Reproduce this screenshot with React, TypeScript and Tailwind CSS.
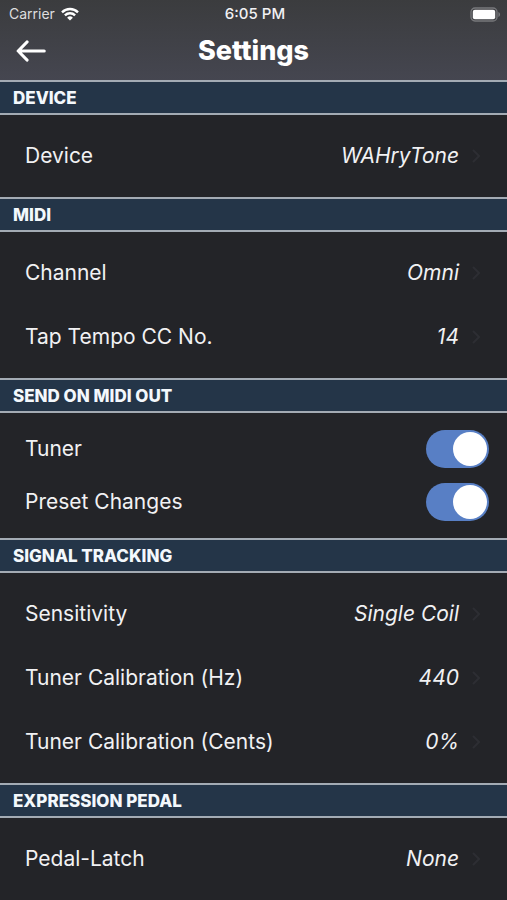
import { useState } from 'react';

type Item = { label: string; value: string };

function SectionTitle({ children }: { children: string }) {
  return (
    <h2 className="flex h-[35px] items-center border-y-2 border-[#a3abb4] bg-[#243548] px-[13px] font-['Inter',sans-serif] text-[17px] leading-[20px] font-extrabold text-[#f3f8fc] uppercase">
      {children}
    </h2>
  );
}

function LinkRow({ label, value }: Item) {
  return (
    <li>
      <button type="button" className="flex h-16 w-full items-center pr-[27px] pl-[25px] text-left">
        <span className="flex-1">{label}</span>
        <span className="italic">{value}</span>
        <svg aria-hidden="true" viewBox="0 0 8 14" className="ml-[13px] h-[14px] w-2" fill="none" stroke="#2d2e33" strokeWidth="2">
          <path d="M1 1l6 6-6 6" />
        </svg>
      </button>
    </li>
  );
}

function LinkSection({ title, items }: { title: string; items: Item[] }) {
  return (
    <section>
      <SectionTitle>{title}</SectionTitle>
      <ul className="py-[9px]">
        {items.map((item) => (
          <LinkRow key={item.label} {...item} />
        ))}
      </ul>
    </section>
  );
}

function ToggleRow({ label }: { label: string }) {
  const [on, setOn] = useState(true);
  return (
    <label className="flex h-[53px] items-center justify-between pr-[18px] pl-[25px]">
      <span>{label}</span>
      <input
        type="checkbox"
        role="switch"
        checked={on}
        onChange={() => setOn(!on)}
        className="flex h-[38px] w-[63px] appearance-none items-center rounded-full bg-[#4a4b50] px-[2px] before:size-[34px] before:rounded-full before:bg-white checked:justify-end checked:bg-[#587fc5]"
      />
    </label>
  );
}

export default function App() {
  return (
    <div className="min-h-screen bg-[#232428] font-['Inter',sans-serif] text-[21px] leading-[28px] text-[#f1f1f3]">
      <header className="h-20 bg-linear-to-b from-[#3b3c3e] to-[#454650]">
        <div className="grid h-7 grid-cols-3 items-center pr-[6px] pl-[9px] text-[14px] leading-[20px]">
          <div className="flex items-center gap-[6px] text-[#dededf]">
            <span>Carrier</span>
            <svg aria-label="Wi-Fi" viewBox="0 0 18 14" className="h-[14px] w-[18px]" fill="none" stroke="#fff" strokeWidth="2.4">
              <path d="M1 5.3a11.5 11.5 0 0 1 16 0M3.9 8.3a7.3 7.3 0 0 1 10.2 0" />
              <path d="M9 13.6L6.1 10.7a4.1 4.1 0 0 1 5.8 0z" fill="#fff" stroke="none" />
            </svg>
          </div>
          <time className="text-center text-[15px] font-medium">6:05 PM</time>
          <svg aria-label="Battery full" viewBox="0 0 31 15" className="h-[15px] w-[31px] justify-self-end">
            <rect x="1" y="1" width="26" height="13" rx="4" fill="none" stroke="#77787b" strokeWidth="1.3" />
            <rect x="2.8" y="2.8" width="22.4" height="9.4" rx="2" fill="#fff" />
            <path d="M28.4 5v5c2.2-.8 2.2-4.2 0-5z" fill="#77787b" />
          </svg>
        </div>
        <div className="grid h-[46px] grid-cols-[1fr_auto_1fr] items-center px-4">
          <button type="button" aria-label="Back" className="w-[30px]">
            <svg viewBox="0 0 30 22" className="h-[22px] w-[30px]" fill="none" stroke="#fff" strokeWidth="3.2" strokeLinecap="round" strokeLinejoin="round">
              <path d="M28.2 11H2.4M11 2L2.2 11l8.8 9" />
            </svg>
          </button>
          <h1 className="text-[27px] leading-[32px] font-extrabold text-white">Settings</h1>
        </div>
      </header>
      <main>
        <LinkSection title="Device" items={[{ label: 'Device', value: 'WAHryTone' }]} />
        <LinkSection
          title="Midi"
          items={[
            { label: 'Channel', value: 'Omni' },
            { label: 'Tap Tempo CC No.', value: '14' },
          ]}
        />
        <section>
          <SectionTitle>Send on midi out</SectionTitle>
          <div className="pt-[9px] pb-[10px]">
            <ToggleRow label="Tuner" />
            <ToggleRow label="Preset Changes" />
          </div>
        </section>
        <LinkSection
          title="Signal tracking"
          items={[
            { label: 'Sensitivity', value: 'Single Coil' },
            { label: 'Tuner Calibration (Hz)', value: '440' },
            { label: 'Tuner Calibration (Cents)', value: '0%' },
          ]}
        />
        <LinkSection title="Expression pedal" items={[{ label: 'Pedal-Latch', value: 'None' }]} />
      </main>
    </div>
  );
}
